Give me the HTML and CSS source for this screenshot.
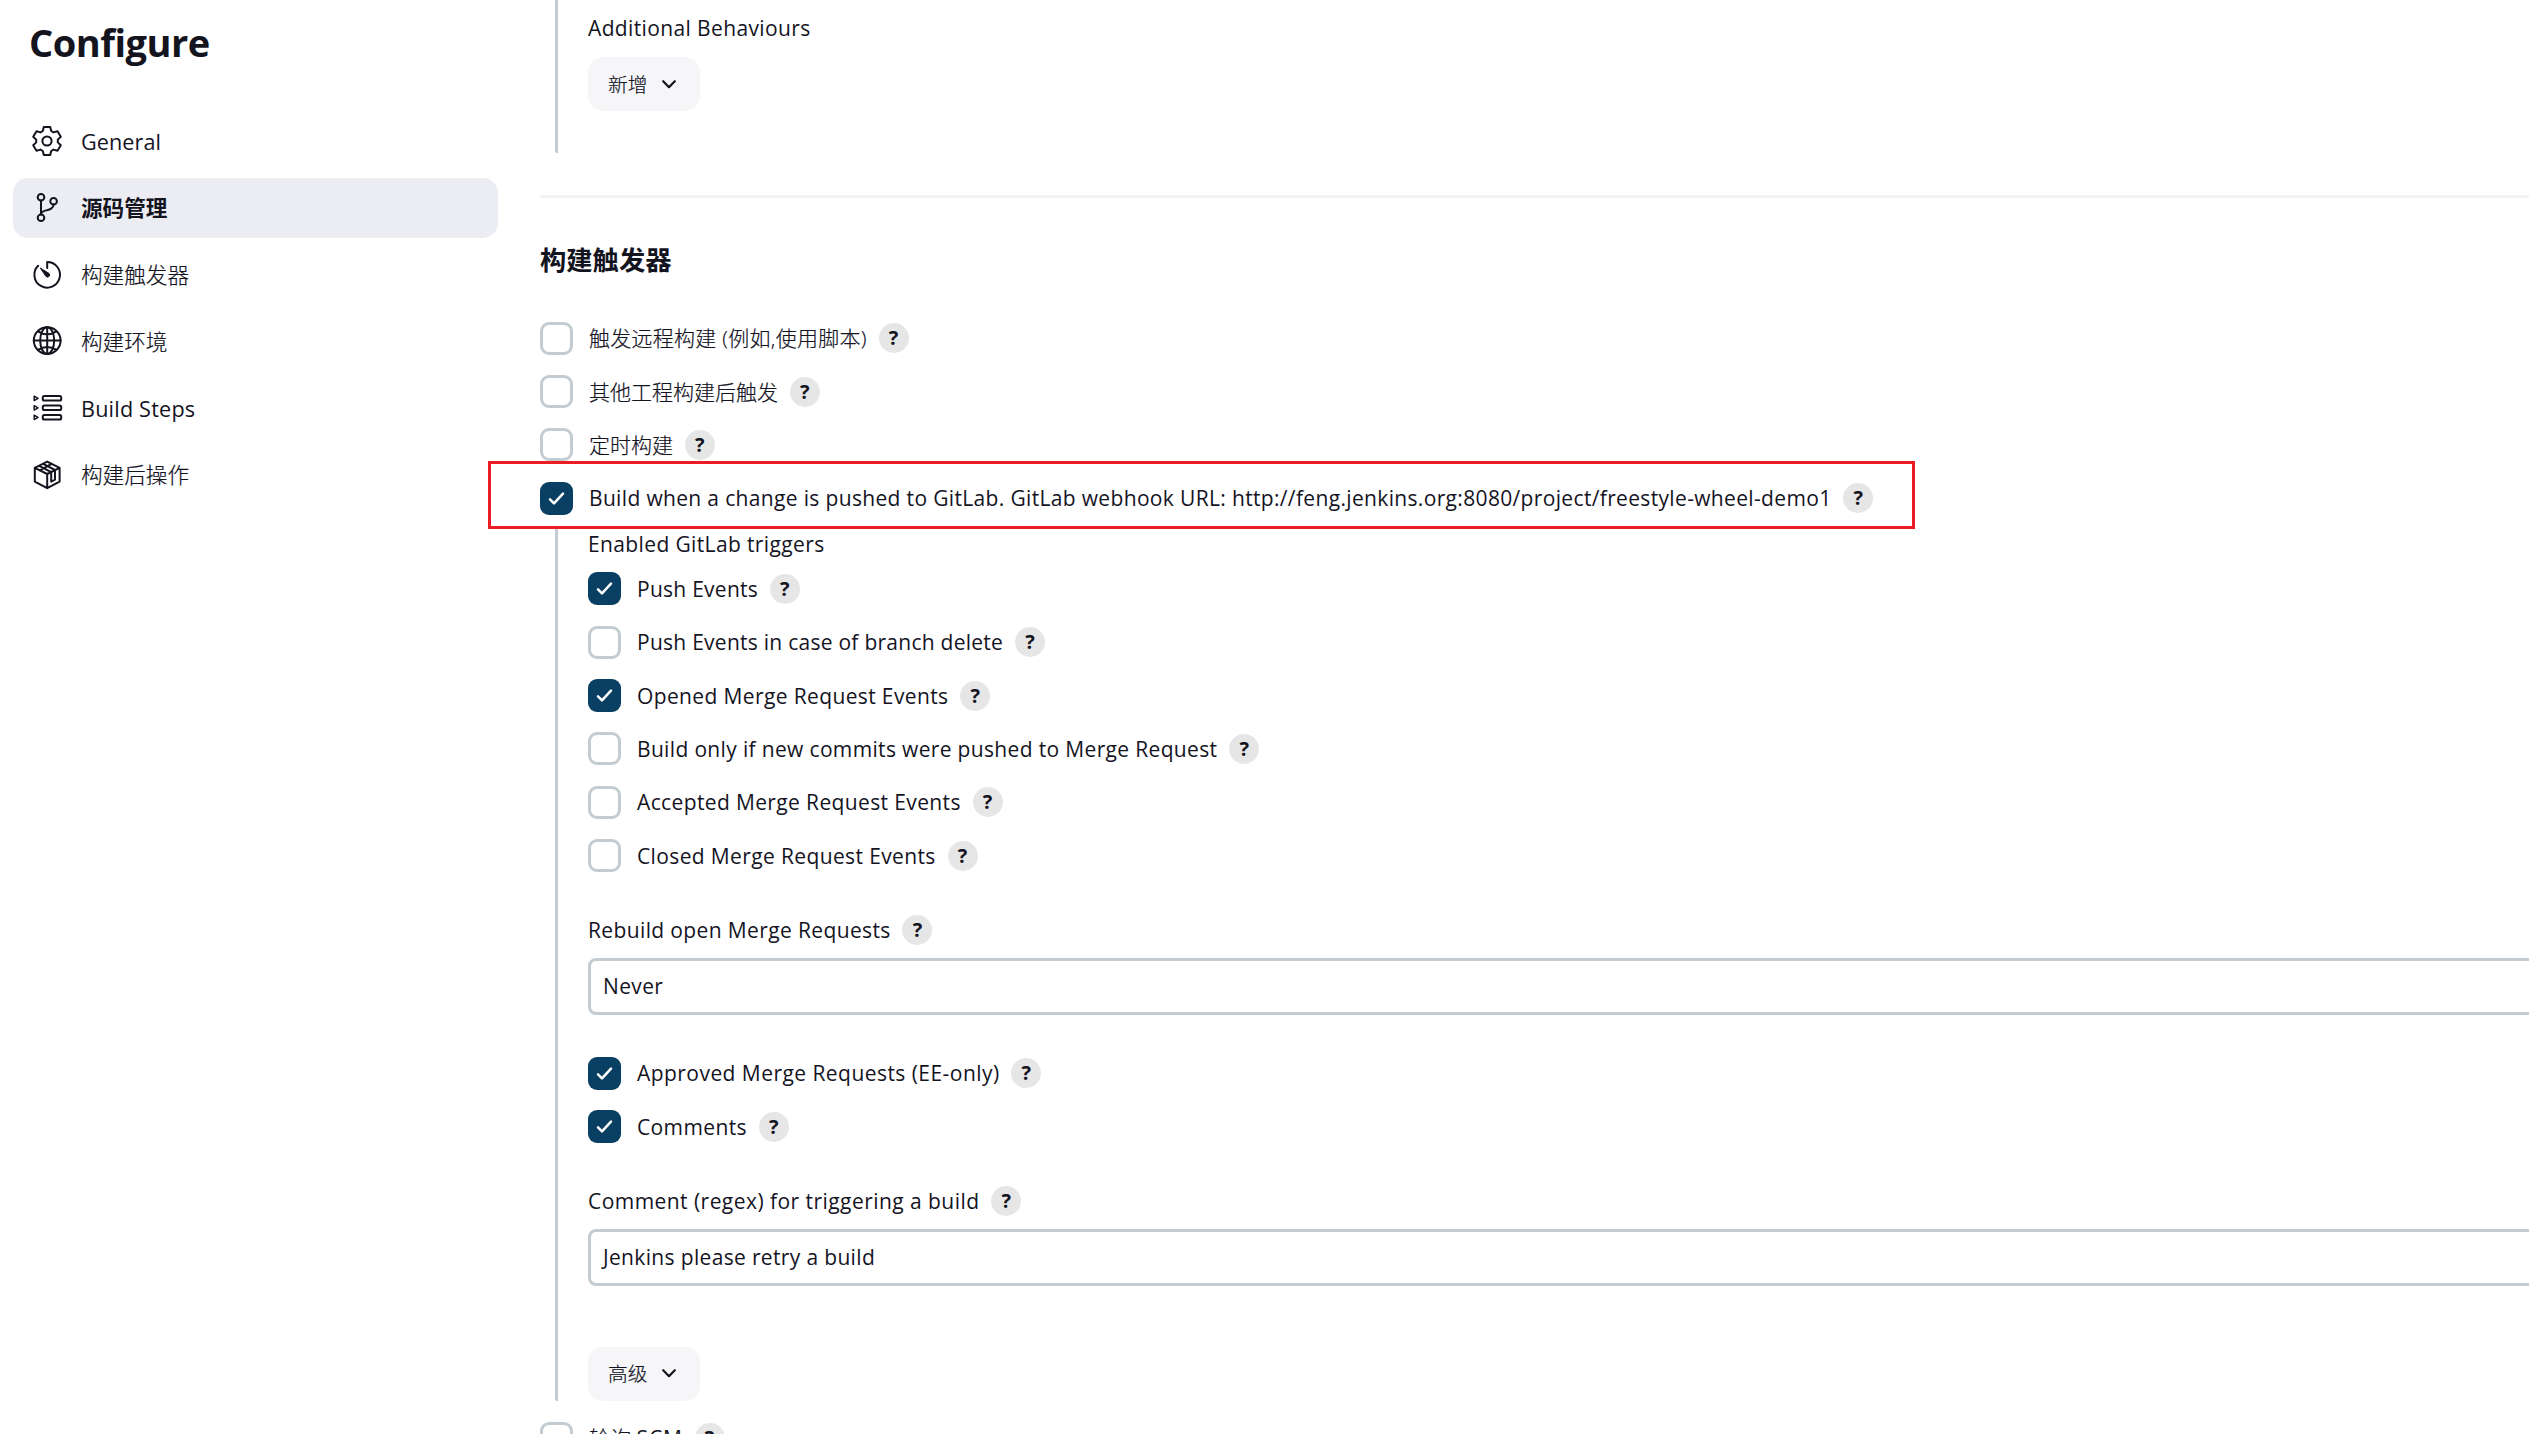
FILE: index.html
```html
<!DOCTYPE html>
<html lang="zh-CN">
<head>
<meta charset="utf-8">
<title>Configure</title>
<link rel="stylesheet" href="styles.css">
</head>
<body>
<svg class="sprite" aria-hidden="true">
  <symbol id="tick" viewBox="0 0 33 33"><path d="M10 17.3 14 21.3 23 11.6" fill="none" stroke="#fff" stroke-width="2.5" stroke-linecap="round" stroke-linejoin="round"/></symbol>
  <symbol id="chevron" viewBox="0 0 14 9"><path d="M1.2 1.2 7 7.2 12.8 1.2" fill="none" stroke="currentColor" stroke-width="2.2" stroke-linecap="round" stroke-linejoin="round"/></symbol>
</svg>
<div class="page">
  <aside class="sidebar">
    <h1 class="title">Configure</h1>
    <nav class="nav">
      <a class="nav-item">
        <svg class="icon" viewBox="-16 -16 32 32"><path d="M-3.2-14H3.2L4.2-10 6.5-8.6 10.5-9.7 13.8-4.3 10.8-1.4V1.4L13.8 4.3 10.5 9.7 6.5 8.6 4.2 10 3.2 14H-3.2L-4.2 10-6.5 8.6-10.5 9.7-13.8 4.3-10.8 1.4V-1.4L-13.8-4.3-10.5-9.7-6.5-8.6-4.2-10Z"/><circle r="4.6"/></svg>
        <span>General</span>
      </a>
      <a class="nav-item active">
        <svg class="icon" viewBox="0 0 32 32"><circle cx="10" cy="5.2" r="3.3"/><circle cx="22.6" cy="9.3" r="3.3"/><circle cx="10" cy="25.8" r="3.3"/><path d="M10 8.4V22.6M22.6 12.5C22.2 20.5 10 16.5 10 22.4"/></svg>
        <span>源码管理</span>
      </a>
      <a class="nav-item">
        <svg class="icon" viewBox="0 0 32 32"><path d="M16.2 9V3A12.8 12.8 0 1 1 7.1 6.8"/><path class="solid" d="M9.6 9.2 18 14.4A2 2 0 0 1 15 17.4Z"/></svg>
        <span>构建触发器</span>
      </a>
      <a class="nav-item">
        <svg class="icon" viewBox="0 0 32 32"><circle cx="16.2" cy="15.6" r="13.4"/><ellipse cx="16.2" cy="15.6" rx="7" ry="13.4"/><path d="M16.2 2.2V29M2.8 15.6H29.6M7 6.3Q16.2 12.2 25.4 6.3M7 24.9Q16.2 19 25.4 24.9"/></svg>
        <span>构建环境</span>
      </a>
      <a class="nav-item">
        <svg class="icon" viewBox="0 0 32 32"><path class="thin" d="M3.2 4.2V8.6L7 6.4ZM3.2 13.7V18.1L7 15.9ZM3.2 23.2V27.6L7 25.4Z"/><rect x="11.8" y="4" width="18.4" height="4.6" rx="1.6"/><rect x="11.8" y="13.5" width="18.4" height="4.6" rx="1.6"/><rect x="11.8" y="23" width="18.4" height="4.6" rx="1.6"/></svg>
        <span>Build Steps</span>
      </a>
      <a class="nav-item">
        <svg class="icon" viewBox="0 0 32 32"><path d="M16.2 2.6 28.6 8.8V22.6L16.2 29.2 3.8 22.6V8.8ZM3.8 8.8 16.2 15 28.6 8.8M16.2 15V29.2M12.2 4.8 24 11V20.6L20.2 22.6V13.2L8.2 6.8M9 11.4 20.6 4.8"/></svg>
        <span>构建后操作</span>
      </a>
    </nav>
  </aside>

  <main class="main">
    <section class="branch first">
      <div class="label">Additional Behaviours</div>
      <button class="button"><span>新增</span><svg class="chevron"><use href="#chevron"/></svg></button>
    </section>

    <hr class="divider">
    <h2 class="heading">构建触发器</h2>

    <ul class="checks">
      <li class="check"><i class="box"></i><span class="text cjk spaced">触发远程构建 (例如,使用脚本)</span><b class="help">?</b></li>
      <li class="check"><i class="box"></i><span class="text cjk">其他工程构建后触发</span><b class="help">?</b></li>
      <li class="check"><i class="box"></i><span class="text cjk">定时构建</span><b class="help">?</b></li>
      <li class="check marked"><i class="box on"><svg><use href="#tick"/></svg></i><span class="text medium">Build when a change is pushed to GitLab. GitLab webhook URL: http://feng.jenkins.org:8080/project/freestyle-wheel-demo1</span><b class="help">?</b></li>
    </ul>

    <section class="branch triggers">
      <div class="label">Enabled GitLab triggers</div>
      <ul class="checks">
        <li class="check"><i class="box on"><svg><use href="#tick"/></svg></i><span class="text tight">Push Events</span><b class="help">?</b></li>
        <li class="check"><i class="box"></i><span class="text tight">Push Events in case of branch delete</span><b class="help">?</b></li>
        <li class="check"><i class="box on"><svg><use href="#tick"/></svg></i><span class="text">Opened Merge Request Events</span><b class="help">?</b></li>
        <li class="check"><i class="box"></i><span class="text medium">Build only if new commits were pushed to Merge Request</span><b class="help">?</b></li>
        <li class="check"><i class="box"></i><span class="text">Accepted Merge Request Events</span><b class="help">?</b></li>
        <li class="check"><i class="box"></i><span class="text">Closed Merge Request Events</span><b class="help">?</b></li>
      </ul>

      <div class="field-label"><span class="text">Rebuild open Merge Requests</span><b class="help">?</b></div>
      <div class="field"><span class="text">Never</span></div>

      <ul class="checks second">
        <li class="check"><i class="box on"><svg><use href="#tick"/></svg></i><span class="text wide">Approved Merge Requests (EE-only)</span><b class="help">?</b></li>
        <li class="check"><i class="box on"><svg><use href="#tick"/></svg></i><span class="text">Comments</span><b class="help">?</b></li>
      </ul>

      <div class="field-label"><span class="text wide">Comment (regex) for triggering a build</span><b class="help">?</b></div>
      <div class="field"><span class="text medium">Jenkins please retry a build</span></div>

      <button class="button advanced"><span>高级</span><svg class="chevron"><use href="#chevron"/></svg></button>
    </section>

    <ul class="checks last">
      <li class="check"><i class="box"></i><span class="text cjk">轮询 <span class="latin">SCM</span></span><b class="help">?</b></li>
    </ul>
  </main>
</div>
</body>
</html>
```
FILE: styles.css
```css
*, *::after { box-sizing: border-box; }

body {
  margin: 0;
  background: #fff;
  color: #14141f;
  font: 21px/28px "Open Sans", "Noto Sans CJK SC", sans-serif;
  letter-spacing: 0.37px;
}

ul { list-style: none; margin: 0; padding: 0; }
.sprite { position: absolute; width: 0; height: 0; }

.page {
  display: grid;
  grid-template-columns: 498px 1fr;
  column-gap: 42px;
  height: 1434px;
  overflow: hidden;
}

/* Sidebar */
.sidebar { padding-left: 13px; }

.title {
  margin: 0;
  padding: 16px 0 0 16px;
  height: 111px;
  font-size: 38px;
  line-height: 52px;
  letter-spacing: -0.5px;
}

.nav { display: flex; flex-direction: column; gap: 6.8px; }

.nav-item {
  display: flex;
  align-items: center;
  gap: 18.5px;
  height: 60px;
  padding-left: 17.5px;
  border-radius: 15px;
  font-size: 21.6px;
  font-weight: 400;
  letter-spacing: 0.1px;
}
.nav-item span { padding-top: 1px; }
.nav-item:nth-child(n+3) span {
  font-weight: 300;
  letter-spacing: 0;
  -webkit-text-stroke: 0.2px;
}
.nav-item:nth-child(5) span {
  font-weight: 400;
  letter-spacing: 0.2px;
  -webkit-text-stroke: 0;
}
.nav-item.active { background: #ecedf3; letter-spacing: 0; }
.nav-item.active span { font-weight: 700; }

.icon {
  width: 32px;
  height: 32px;
  fill: none;
  stroke: currentColor;
  stroke-width: 2;
  stroke-linejoin: round;
  stroke-linecap: round;
}
.icon .solid { fill: currentColor; stroke-width: 1; }
.icon .thin { stroke-width: 1.5; }

/* Main column */
.main { min-width: 0; white-space: nowrap; }

.branch {
  margin-left: 15px;
  padding-left: 30px;
  border-left: 3px solid #c3ccd1;
}
.first { height: 153px; padding-top: 13.5px; border-radius: 0 0 0 2px; }
.first .button { margin-top: 15.5px; }

.button {
  display: flex;
  align-items: center;
  gap: 15px;
  width: 112px;
  height: 54px;
  padding: 0 0 0 20px;
  border: 0;
  border-radius: 15px;
  background: #f6f6f9;
  color: inherit;
  font-family: inherit;
  font-size: 19.7px;
  font-weight: 300;
  letter-spacing: 0;
  -webkit-text-stroke: 0.2px;
}
.button span { padding-bottom: 2px; }
.chevron { width: 14px; height: 9px; }

.divider {
  height: 3px;
  margin: 42px 0;
  border: 0;
  background: #f2f2f7;
}

.heading {
  margin: 0 0 41.7px;
  font-size: 26.3px;
  line-height: 40px;
  letter-spacing: 0;
}

.checks { display: grid; row-gap: 20.37px; }

.check {
  display: flex;
  align-items: center;
  height: 33px;
  position: relative;
}

.box {
  width: 33px;
  height: 33px;
  margin-right: 16px;
  border: 3px solid #c3ccd1;
  border-radius: 9px;
}
.box.on { border: 0; background: #083f62; }
.box svg { display: block; width: 33px; height: 33px; }

.tight { letter-spacing: 0.26px; }
.medium { letter-spacing: 0.34px; }
.wide { letter-spacing: 0.45px; }
.cjk { font-weight: 300; letter-spacing: 0; -webkit-text-stroke: 0.2px; }
.spaced { letter-spacing: 0.27px; }
.latin { font-weight: 400; letter-spacing: 0.9px; -webkit-text-stroke: 0; }

.help {
  width: 30px;
  height: 30px;
  margin-left: 11.8px;
  border-radius: 50%;
  background: #e6e6e6;
  font-size: 20px;
  line-height: 29px;
  letter-spacing: 0;
  text-align: center;
}

/* Red frame drawn over the GitLab webhook row */
.marked::after {
  content: "";
  position: absolute;
  left: -52px;
  top: -21px;
  width: 1427px;
  height: 68px;
  border: 3px solid #ed1c24;
}

.triggers { height: 872px; margin-top: 14px; padding-top: 1px; border-radius: 0 0 0 2px; }
.triggers .label { margin-bottom: 14.6px; }

.field-label {
  display: flex;
  align-items: center;
  height: 30px;
  margin: 42.8px 0 13px;
}

.field {
  display: flex;
  align-items: center;
  height: 57px;
  margin-right: -40px;
  padding-left: 12px;
  border: 3px solid #c3ccd1;
  border-radius: 8px;
}

.second { margin-top: 41.8px; }
.advanced { margin-top: 61px; }
.last { margin-top: 21px; }
```
